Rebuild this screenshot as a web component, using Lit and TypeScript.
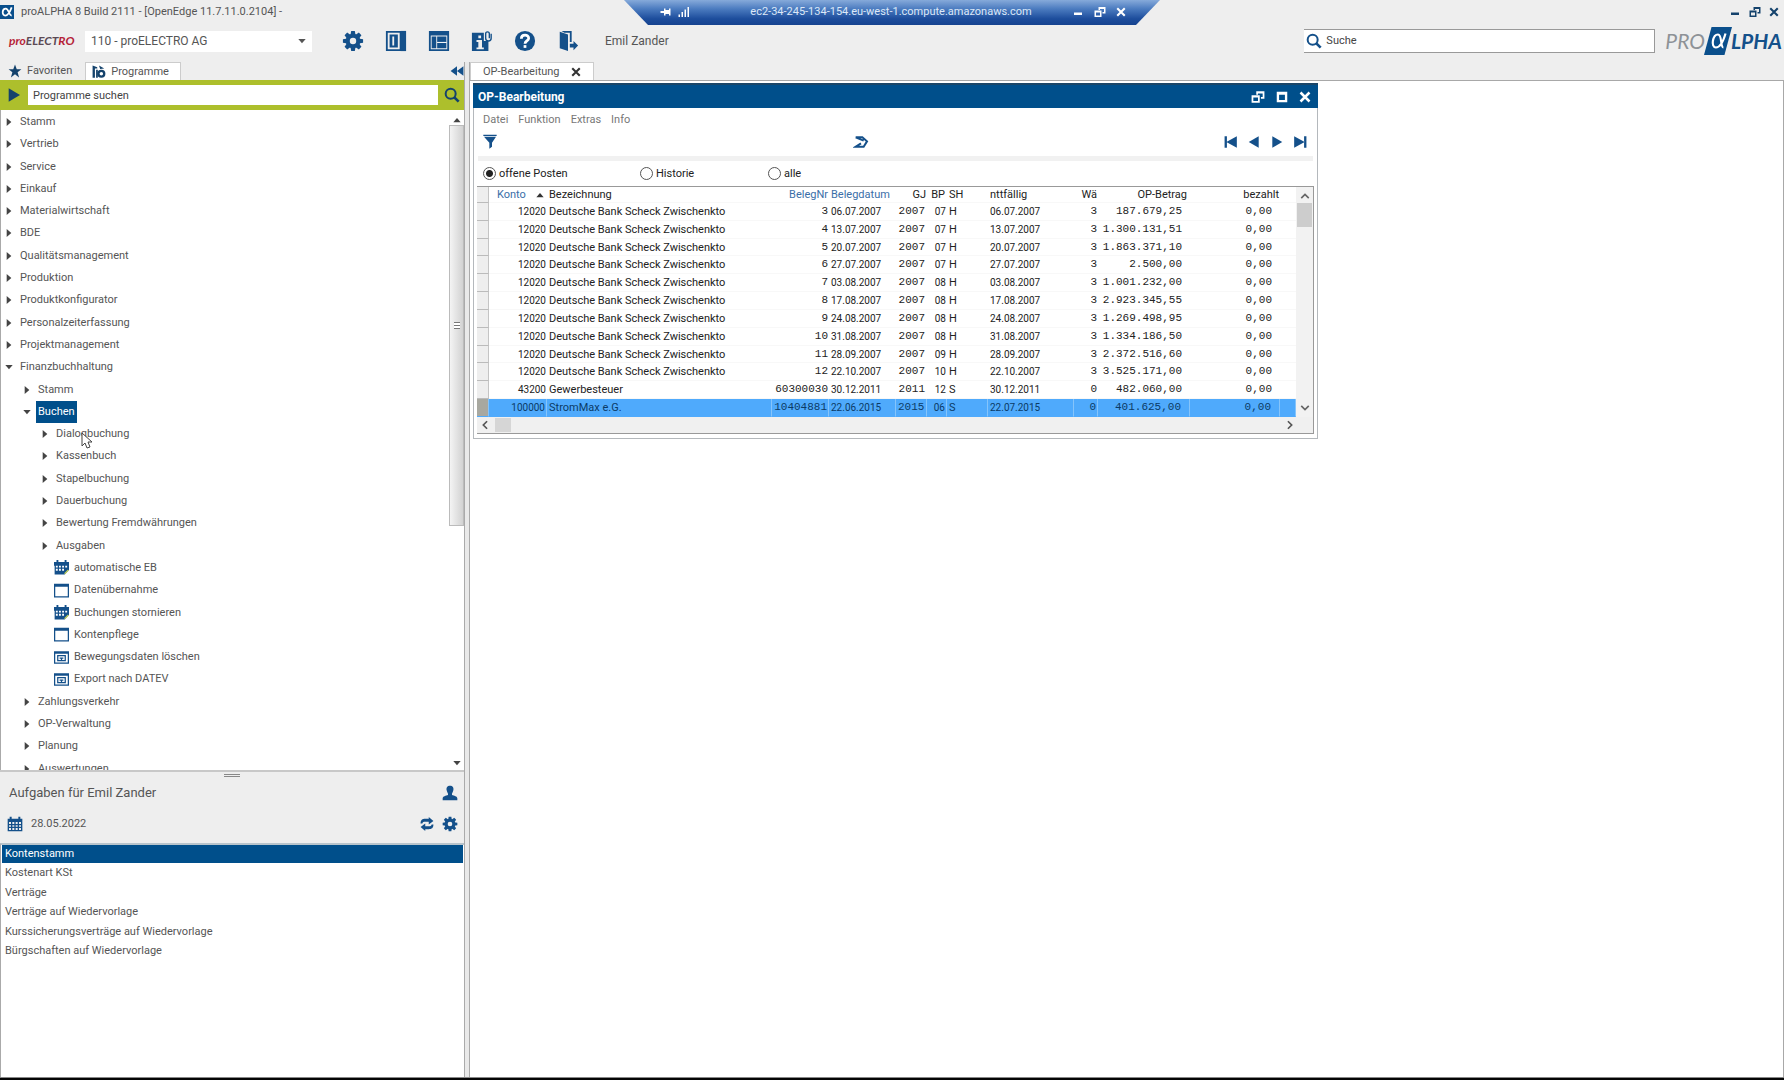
import { LitElement, html, css, svg, nothing } from "lit";
import { customElement, state } from "lit/decorators.js";
import { classMap } from "lit/directives/class-map.js";

const gearTeeth = [0, 45, 90, 135, 180, 225, 270, 315];

const icons = {
  gear: svg`<g>${gearTeeth.map((a) => svg`<path d="M10 1h4l.8 5h-5.600z" transform="rotate(${a} 12 12)"/>`)}<path fill-rule="evenodd" d="M12 4a8 8 0 1 0 0 16 8 8 0 0 0 0-16zm0 4.500a3.500 3.500 0 1 1 0 7 3.500 3.500 0 0 1 0-7z"/></g>`,
  columns: svg`<path fill-rule="evenodd" d="M1 1h17v22H1zM3 3v18h13V3z"/><path d="M17 1h6v22h-6z"/><path fill-rule="evenodd" d="M5 5h9v14H5zM8 7v10h2V7z"/>`,
  layout: svg`<path fill-rule="evenodd" d="M1 1h22v22H1zM3 6v15h18V6z"/><path d="M4 7h5v13H4zM10 7h10v6H10zM10 14h10v6H10z"/><path fill="#fff" d="M10 13h10v1H10z"/>`,
  info: svg`<path fill-rule="evenodd" d="M1 3h13v9h5v11H1zM8 6v3h3V6zM6 11v2h2v6H6v2h8v-2h-2v-8z"/><path fill="none" stroke="currentColor" stroke-width="1.500" d="M22 4v5a3 3 0 0 1-6 0V4a2 2 0 0 1 4 0v5"/>`,
  help: svg`<circle cx="12" cy="12" r="11"/><path fill="none" stroke="#fff" stroke-width="3" d="M8 9.500c0-5 8-5 8-.5 0 3-4 2.500-4 6"/><path fill="#fff" d="M10.500 16.500h3v3h-3z"/>`,
  exit: svg`<path d="M3 2l9 3v18l-9-3z"/><path d="M5 1h11v12h-2V3H8z"/><path d="M14 15h4v-3l5 5-5 5v-3h-4z"/>`,
  star: svg`<path d="M12 1l3 8h8l-6.500 5 2.500 9-7-5.500L5 23l2.500-9L1 9h8z"/>`,
  programs: svg`<path d="M1 1l8 3v2H5v16H1z"/><path d="M7 8h3v14H7zM12 1l9 5-7 1z"/><path fill-rule="evenodd" d="M16 8a7 7 0 1 0 0 14 7 7 0 0 0 0-14zm0 4a3 3 0 1 1 0 6 3 3 0 0 1 0-6z"/>`,
  rewind: svg`<path d="M12 4v16L1 12zM23 4v16L12 12z"/>`,
  play: svg`<path d="M4 2l17 10L4 22z"/>`,
  back: svg`<path d="M20 2L3 12l17 10z"/>`,
  first: svg`<path d="M1 2h4v20H1zM22 2v20L4 12z"/>`,
  last: svg`<path d="M19 2h4v20h-4zM2 2v20l18-10z"/>`,
  search: svg`<g fill="none" stroke="currentColor" stroke-width="3"><circle cx="10" cy="10" r="7.500"/><path stroke-width="4" d="M15.500 15.500L22 22"/></g>`,
  calendar: svg`<path fill-rule="evenodd" d="M1 4h3V1h3v3h10V1h3v3h3v19H1zM3 9v3h3V9zm5 0v3h3V9zm5 0v3h3V9zm5 0v3h3V9zM3 14v2h3v-2zm5 0v2h3v-2zm5 0v2h3v-2zm5 0v2h3v-2zM3 18v3h3v-3zm5 0v3h3v-3zm5 0v3h3v-3zm5 0v3h3v-3z"/>`,
  schedule: svg`<path fill-rule="evenodd" d="M0 3h4V0h3v3h10V0h3v3h4v13l-7 7H1V9H0zM3 9v3h3V9zm5 0v3h3V9zm5 0v3h3V9zm5 0v3h3V9zM3 14v3h3v-3zm5 0v3h3v-3zm5 0v3h3v-3z"/><path fill="none" stroke="#c3cf5a" stroke-width="2" d="M17 22l6-6"/>`,
  form: svg`<path fill-rule="evenodd" d="M0 1h24v22H0zM2 6v15h20V6z"/>`,
  report: svg`<path fill-rule="evenodd" d="M0 2h24v20H0zM2 6v14h20V6z"/><path fill-rule="evenodd" d="M5 8h14v10H5zM7 10v6h10v-6z"/><path d="M9 12h6v2h-2v2h-2v-2H9z"/>`,
  user: svg`<path d="M12 1c4 0 6 3 5 7-.5 2-1.500 4-2 5v2c3 1 8 2 8 5v3H1v-3c0-3 5-4 8-5v-2c-.5-1-1.500-3-2-5-1-4 1-7 5-7z"/>`,
  refresh: svg`<path d="M1 11c0-6 3-8 8-8h6V0l8 7-8 6V8h-6c-3 0-4 0-5 3zM23 13c0 6-3 8-8 8H9v3l-8-7 8-6v5h6c3 0 4 0 5-3z"/>`,
  filter: svg`<path d="M2 1h20v2H2zM3 4h18l-6 9v6l-4 3V13z"/>`,
  flag: svg`<path fill="none" stroke="currentColor" stroke-width="3" d="M4 5h10l7 6-5 8H4l8-5M4 5l12 5"/>`,
  minimize: svg`<path d="M4 13h16v5H4z"/>`,
  restore: svg`<path fill-rule="evenodd" d="M1 9h14v13H1zm3 4v6h8v-6z"/><path d="M9 2h14v13h-6v-3h3V6h-8v2H9z"/>`,
  maximize: svg`<path fill-rule="evenodd" d="M3 3h18v18H3zm4 5v9h10V8z"/>`,
  close: svg`<path fill="none" stroke="currentColor" stroke-width="5" d="M3 3l18 18M21 3L3 21"/>`,
  pin: svg`<path d="M1 10h7V5h3v3h7V5h3v14h-3v-3h-7v3H8v-5H1z"/>`,
  signal: svg`<path d="M1 17h3v5H1zM7 12h3v10H7zM13 7h3v15h-3zM19 2h3v20h-3z"/>`,
  chevronUp: svg`<path fill="none" stroke="currentColor" stroke-width="4" d="M3 17l9-9 9 9"/>`,
  chevronDown: svg`<path fill="none" stroke="currentColor" stroke-width="4" d="M3 7l9 9 9-9"/>`,
  chevronLeft: svg`<path fill="none" stroke="currentColor" stroke-width="4" d="M17 3l-9 9 9 9"/>`,
  chevronRight: svg`<path fill="none" stroke="currentColor" stroke-width="4" d="M7 3l9 9-9 9"/>`,
  triangleUp: svg`<path d="M1 19h22L12 6z"/>`,
  triangleDown: svg`<path d="M1 6h22L12 19z"/>`,
  triangleRight: svg`<path d="M5 0v24l14-12z"/>`,
  alpha: svg`<path d="M0 0h24v24H0z" fill="#0a4f8c"/><path fill="none" stroke="#fff" stroke-width="3" d="M20 4c-3 8-6 14-11 14-6 0-6-12 1-12 5 0 5 12 10 12"/>`,
};

type IconName = keyof typeof icons;

const icon = (name: IconName, cls = "i16") =>
  html`<svg class=${cls} viewBox="0 0 24 24" fill="currentColor" aria-hidden="true">${icons[name]}</svg>`;

interface TreeNode {
  depth: 0 | 1 | 2;
  label: string;
  kind?: IconName;
  open?: boolean;
}

const tree: TreeNode[] = [
  ...["Stamm", "Vertrieb", "Service", "Einkauf", "Materialwirtschaft", "BDE", "Qualitätsmanagement", "Produktion",
    "Produktkonfigurator", "Personalzeiterfassung", "Projektmanagement"].map((label): TreeNode => ({ depth: 0, label })),
  { depth: 0, label: "Finanzbuchhaltung", open: true },
  { depth: 1, label: "Stamm" },
  { depth: 1, label: "Buchen", open: true },
  ...["Dialogbuchung", "Kassenbuch", "Stapelbuchung", "Dauerbuchung", "Bewertung Fremdwährungen", "Ausgaben"]
    .map((label): TreeNode => ({ depth: 2, label })),
  { depth: 2, label: "automatische EB", kind: "schedule" },
  { depth: 2, label: "Datenübernahme", kind: "form" },
  { depth: 2, label: "Buchungen stornieren", kind: "schedule" },
  { depth: 2, label: "Kontenpflege", kind: "form" },
  { depth: 2, label: "Bewegungsdaten löschen", kind: "report" },
  { depth: 2, label: "Export nach DATEV", kind: "report" },
  ...["Zahlungsverkehr", "OP-Verwaltung", "Planung", "Auswertungen"].map((label): TreeNode => ({ depth: 1, label })),
];

const tasks = ["Kontenstamm", "Kostenart KSt", "Verträge", "Verträge auf Wiedervorlage",
  "Kurssicherungsverträge auf Wiedervorlage", "Bürgschaften auf Wiedervorlage"];

const bank = "Deutsche Bank Scheck Zwischenkto";
const rows = [
  ["12020", bank, "3", "06.07.2007", "2007", "07", "H", "06.07.2007", "3", "187.679,25", "0,00"],
  ["12020", bank, "4", "13.07.2007", "2007", "07", "H", "13.07.2007", "3", "1.300.131,51", "0,00"],
  ["12020", bank, "5", "20.07.2007", "2007", "07", "H", "20.07.2007", "3", "1.863.371,10", "0,00"],
  ["12020", bank, "6", "27.07.2007", "2007", "07", "H", "27.07.2007", "3", "2.500,00", "0,00"],
  ["12020", bank, "7", "03.08.2007", "2007", "08", "H", "03.08.2007", "3", "1.001.232,00", "0,00"],
  ["12020", bank, "8", "17.08.2007", "2007", "08", "H", "17.08.2007", "3", "2.923.345,55", "0,00"],
  ["12020", bank, "9", "24.08.2007", "2007", "08", "H", "24.08.2007", "3", "1.269.498,95", "0,00"],
  ["12020", bank, "10", "31.08.2007", "2007", "08", "H", "31.08.2007", "3", "1.334.186,50", "0,00"],
  ["12020", bank, "11", "28.09.2007", "2007", "09", "H", "28.09.2007", "3", "2.372.516,60", "0,00"],
  ["12020", bank, "12", "22.10.2007", "2007", "10", "H", "22.10.2007", "3", "3.525.171,00", "0,00"],
  ["43200", "Gewerbesteuer", "60300030", "30.12.2011", "2011", "12", "S", "30.12.2011", "0", "482.060,00", "0,00"],
  ["100000", "StromMax e.G.", "10404881", "22.06.2015", "2015", "06", "S", "22.07.2015", "0", "401.625,00", "0,00"],
];

const columns = [
  { label: "Konto", cls: "c-konto num", sort: true },
  { label: "Bezeichnung", cls: "c-bez" },
  { label: "BelegNr", cls: "c-nr mono", sort: true },
  { label: "Belegdatum", cls: "c-datum date", sort: true },
  { label: "GJ", cls: "c-gj mono" },
  { label: "BP", cls: "c-bp num" },
  { label: "SH", cls: "c-sh" },
  { label: "nttfällig", cls: "c-fall date" },
  { label: "Wä", cls: "c-wae mono" },
  { label: "OP-Betrag", cls: "c-betrag mono" },
  { label: "bezahlt", cls: "c-bez2 mono" },
];

const base = css`
  * { box-sizing: border-box; }
  button, input, select { font: inherit; color: inherit; border: 0; margin: 0; padding: 0; background: none; border-radius: 0; outline: none; }
  button { display: flex; align-items: center; justify-content: center; cursor: pointer; }
  ul { list-style: none; margin: 0; padding: 0; }
  svg { display: block; flex: none; }
  .i8 { width: 8px; height: 8px; }
  .i10 { width: 10px; height: 10px; }
  .i12 { width: 12px; height: 12px; }
  .i14 { width: 14px; height: 14px; }
  .i16 { width: 16px; height: 16px; }
  .i22 { width: 22px; height: 22px; }
`;

@customElement("op-window")
class OpWindow extends LitElement {
  @state() private filter = "offene Posten";
  @state() private selected = 11;

  static styles = [base, css`
    :host { display: block; background: #fff; border: 1px solid #b4b8bc; border-top: 0; color: #222; padding-bottom: 4px; }
    .caption { display: flex; align-items: center; height: 25px; margin: 0 -1px; padding: 0 7px 0 5px; background: #004f8b; border-top: 2px solid #1b4668; color: #fff; }
    h1 { flex: 1; margin: 0; font: bold 12px/16px Roboto, sans-serif; }
    .buttons { display: flex; gap: 10px; }
    .menu { display: flex; gap: 10px; padding: 5px 9px 0; height: 22px; color: #777; }
    .menu button { height: 14px; }
    .tools { display: flex; align-items: center; justify-content: space-between; height: 24px; padding: 0 10px 0 8px; color: #14508a; }
    .nav { display: flex; gap: 9px; }
    .rule { height: 5px; margin: 2px 4px 0; background: #f1f1f1; }
    .filters { display: grid; grid-template-columns: 157px 128px 1fr; border: 0; margin: 0; padding: 4px 9px; height: 25px; }
    .filters label { display: flex; align-items: center; gap: 3px; }
    .filters input { appearance: none; width: 13px; height: 13px; border: 1px solid #555; border-radius: 50%; background: #fff; }
    .filters input:checked { background: radial-gradient(#222 0 3px, #fff 4px); }
    .browse { display: grid; grid-template-columns: 1fr 17px; margin: 0 3px; border: 1px solid #999; border-width: 1px 1px 1px 0; }
    table { width: 100%; height: 230px; table-layout: fixed; border-collapse: separate; border-spacing: 0; }
    td, th { padding: 0 1px 0 2px; overflow: hidden; white-space: nowrap; font-weight: normal; text-align: left; line-height: 15px; border-bottom: 1px solid #f8f8f8; }
    th { color: #222; }
    th button { display: inline-flex; gap: 10px; color: #3a6ea8; }
    th button svg { color: #333; }
    .grip { width: 12px; background: #eee; border-right: 1px solid #c4c4c4; border-bottom: 1px solid #bbb; }
    .c-konto { width: 58px; }
    .c-bez { width: 225px; }
    .c-nr { width: 57px; }
    .c-datum { width: 67px; }
    .c-gj { width: 31px; }
    .c-bp { width: 20px; }
    .c-sh { width: 41px; }
    .c-fall { width: 86px; }
    .c-wae { width: 24px; }
    .c-betrag { width: 92px; }
    .c-bez2 { width: 90px; }
    td.num, td.date { font-size: 10px; }
    .num, .mono { text-align: right; }
    td.mono { font: 11px/15px "Liberation Mono", monospace; }
    th.c-konto { padding-left: 8px; text-align: left; }
    th.c-bp { padding: 0 2px; }
    td.c-gj { padding-right: 2px; }
    th.c-betrag { padding-right: 3px; }
    td.c-betrag, td.c-bez2 { padding-right: 8px; }
    tr.selected td { background: #4faafc; color: #0b3a66; border-right: 1px solid #85c4fb; border-bottom-color: #4faafc; }
    tr.selected td.grip { background: #a8a8a0; }
    .vscroll { display: flex; flex-direction: column; align-items: center; background: #f2f2f2; color: #666; padding: 4px 0; }
    .vthumb { width: 15px; height: 24px; margin-top: 2px; background: #cdcdcd; }
    .push { flex: 1; }
    .hscroll { grid-column: 1 / -1; display: flex; align-items: center; height: 16px; background: #f0f0f0; color: #555; padding: 0 18px 0 3px; }
    .hthumb { width: 16px; height: 14px; margin-left: 5px; background: #d6d6d6; }
  `];

  render() {
    return html`
      <div class="caption">
        <h1>OP-Bearbeitung</h1>
        <div class="buttons">
          <button aria-label="Wiederherstellen">${icon("restore", "i14")}</button>
          <button aria-label="Maximieren">${icon("maximize", "i14")}</button>
          <button aria-label="Schließen">${icon("close", "i12")}</button>
        </div>
      </div>
      <div class="menu">${["Datei", "Funktion", "Extras", "Info"].map((m) => html`<button>${m}</button>`)}</div>
      <div class="tools">
        <button aria-label="Filter">${icon("filter", "i16")}</button>
        <button aria-label="Markieren">${icon("flag", "i16")}</button>
        <div class="nav">
          <button aria-label="Erster">${icon("first", "i14")}</button>
          <button aria-label="Vorheriger">${icon("back", "i14")}</button>
          <button aria-label="Nächster">${icon("play", "i14")}</button>
          <button aria-label="Letzter">${icon("last", "i14")}</button>
        </div>
      </div>
      <div class="rule"></div>
      <div class="filters" role="radiogroup">
        ${["offene Posten", "Historie", "alle"].map((f) => html`
          <label><input type="radio" name="filter" .checked=${f === this.filter} @change=${() => (this.filter = f)}>${f}</label>`)}
      </div>
      <div class="browse">
        <table>
          <thead><tr>
            <th class="grip"></th>
            ${columns.map((c, i) => html`<th class=${c.cls}>${c.sort
              ? html`<button>${c.label}${i === 0 ? icon("triangleUp", "i8") : nothing}</button>` : c.label}</th>`)}
            <th></th>
          </tr></thead>
          <tbody>
            ${rows.map((r, i) => html`
              <tr class=${classMap({ selected: i === this.selected })} @click=${() => (this.selected = i)}>
                <td class="grip"></td>
                ${r.map((v, c) => html`<td class=${columns[c].cls}>${v}</td>`)}
                <td></td>
              </tr>`)}
          </tbody>
        </table>
        <div class="vscroll">${icon("chevronUp", "i10")}<div class="vthumb"></div><div class="push"></div>${icon("chevronDown", "i10")}</div>
        <div class="hscroll">${icon("chevronLeft", "i10")}<div class="hthumb"></div><div class="push"></div>${icon("chevronRight", "i10")}</div>
      </div>`;
  }
}

@customElement("app-root")
class AppRoot extends LitElement {
  @state() private selectedNode = 13;
  @state() private selectedTask = 0;

  static styles = [base, css`
    :host { display: flex; flex-direction: column; height: 100vh; overflow: hidden; position: relative; background: #eeeeee; color: #555; font: 11px/14px Roboto, sans-serif; }
    .titlebar { display: flex; align-items: center; height: 22px; padding: 1px 5px 0 0; gap: 7px; }
    .titlebar .text { flex: 1; }
    .controls { display: flex; gap: 8px; color: #14426c; }
    .remote { position: absolute; top: 0; left: 50%; width: 536px; height: 25px; transform: translateX(-50%); display: flex; align-items: center; padding: 0 34px 2px 36px; color: #dce8f8; background: linear-gradient(#86aada, #4c7cc0 35%, #1d4d9c 75%, #16438f); clip-path: polygon(0 0, 100% 0, 512px 100%, 24px 100%); }
    .remote .host { flex: 1; padding-left: 20px; text-align: center; }
    .remote button, .remote svg { color: #fff; }
    .status { display: flex; gap: 6px; }
    .remote .controls { gap: 10px; }
    .toolbar { display: flex; align-items: center; height: 38px; padding: 0 2px 0 9px; color: #14508a; }
    .company { width: 76px; font: italic bold 12px/14px Lato, sans-serif; color: #5b4a55; }
    .company .red { color: #b51f38; }
    .client { position: relative; display: flex; align-items: center; width: 227px; color: #333; }
    .client select { appearance: none; width: 100%; height: 21px; padding: 0 24px 0 6px; background: #fff; font-size: 12px; color: #555; }
    .client svg { position: absolute; right: 6px; color: #555; pointer-events: none; }
    .actions { display: flex; gap: 21px; margin: 0 26px 0 30px; }
    .user { flex: 1; font-size: 12px; color: #555; }
    .search { display: flex; align-items: center; gap: 4px; width: 351px; height: 24px; padding-left: 2px; background: #fff; border: 1px solid #999; border-width: 1px 1px 1px 0; color: #222; }
    .search svg { color: #14508a; }
    .search input { flex: 1; min-width: 0; }
    input::placeholder { color: #444; opacity: 1; }
    .brand { display: flex; align-items: center; margin-left: 10px; font: italic 21px/26px Lato, sans-serif; color: #8d9297; }
    .brand svg { width: 28px; height: 28px; margin: 0 -1px; }
    .brand b { color: #14508a; }
    .main { flex: 1; min-height: 0; display: grid; grid-template-columns: 464px 6px 1fr; }
    .side { display: flex; flex-direction: column; min-height: 0; }
    .tabs { display: flex; align-items: flex-end; height: 20px; }
    .tab { height: 18px; gap: 5px; color: #555; }
    .tab svg { color: #14426c; }
    .tab.fav { padding: 0 13px 0 8px; }
    .tab.active { background: #fff; border: 1px solid #ccc; border-bottom: 0; }
    .tab.prog { padding: 0 11px 0 6px; }
    .tabs .fold { margin-left: auto; height: 18px; color: #14508a; }
    .find { display: flex; align-items: center; height: 30px; padding: 0 4px 0 6px; gap: 6px; background: #adbf2c; color: #14426c; }
    .find input { flex: 1; min-width: 0; height: 20px; padding: 0 5px; background: #fff; color: #333; }
    .treepane { flex: 1; min-height: 0; display: grid; grid-template-columns: 1fr 15px; background: #fff; border-left: 1px solid #aaa; overflow: hidden; }
    .tree { display: flex; flex-direction: column; justify-content: space-between; height: calc(100% + 9px); padding: 1px 0 0 4px; }
    .tree li { display: flex; height: 22px; }
    .tree .d1 { padding-left: 18px; }
    .tree .d2 { padding-left: 36px; }
    .tree .leaf { padding-left: 49px; }
    .tree button { gap: 5px; }
    .tree button svg { color: #444; }
    .tree button .i16 { width: 15px; height: 15px; color: #14508a; }
    .tree .label { display: flex; align-items: center; height: 22px; padding: 0 2px; }
    .tree .leaf .label { padding: 0; }
    .tree .selected .label { background: #004f8b; color: #fff; }
    .bar { display: flex; flex-direction: column; align-items: center; padding: 6px 0 4px; color: #444; }
    .thumb { display: flex; align-items: center; justify-content: center; width: 100%; height: 401px; flex: none; margin-top: 1px; border: 1px solid #bbb; background: linear-gradient(90deg, #f4f4f4, #d2d2d2); }
    .ridge { width: 6px; height: 7px; background: repeating-linear-gradient(#777 0 1px, #fff 1px 3px); }
    .push { flex: 1; }
    .tasks { flex: none; display: flex; flex-direction: column; height: 307px; border-top: 2px solid #c8c8c8; }
    .handle { width: 16px; height: 3px; margin: 2px auto 0; border: 1px solid #888; border-width: 1px 0; }
    .row { display: flex; align-items: center; height: 31px; padding: 0 6px 0 7px; gap: 8px; color: #14508a; }
    .row.head { padding-left: 9px; }
    .row h2, .row .day { flex: 1; margin: 0; color: #555; }
    .row h2 { font: 13px/16px Roboto, sans-serif; }
    .list { flex: 1; margin-top: 4px; background: #fff; border-top: 2px solid #b8c4cc; border-left: 1px solid #aaa; padding: 0 1px; }
    .list ul { display: flex; flex-direction: column; justify-content: space-between; height: 115px; }
    .list button { width: 100%; height: 18px; justify-content: flex-start; padding: 0 3px; }
    .list .selected { background: #004f8b; color: #fff; }
    .splitter { border: 1px solid #aaa; border-width: 0 1px; background: #e9e9e9; margin-top: 2px; }
    .desk { display: flex; flex-direction: column; min-width: 0; }
    .desk .tab { gap: 11px; padding: 0 12px; }
    .desk .tab svg { color: #333; }
    .canvas { position: relative; flex: 1; background: #fff; border: 1px solid #a8a8a8; border-left: 0; border-bottom: 0; }
    op-window { position: absolute; left: 3px; top: 2px; width: 845px; }
    .taskbar { flex: none; height: 3px; border-top: 1px solid #888; background: #050505; }
    .pointer { position: absolute; left: 81px; top: 432px; width: 12px; height: 18px; }
  `];

  private node(n: TreeNode, i: number) {
    const cls = { d1: n.depth === 1, d2: n.depth === 2 && !n.kind, leaf: !!n.kind, selected: i === this.selectedNode };
    return html`<li class=${classMap(cls)}><button @click=${() => (this.selectedNode = i)}>
      ${n.kind ? icon(n.kind) : icon(n.open ? "triangleDown" : "triangleRight", "i8")}<span class="label">${n.label}</span>
    </button></li>`;
  }

  render() {
    return html`
      <header class="titlebar">
        ${icon("alpha", "i14")}
        <span class="text">proALPHA 8 Build 2111 - [OpenEdge 11.7.11.0.2104] -</span>
        <div class="controls">
          <button aria-label="Minimieren">${icon("minimize", "i12")}</button>
          <button aria-label="Wiederherstellen">${icon("restore", "i12")}</button>
          <button aria-label="Schließen">${icon("close", "i10")}</button>
        </div>
      </header>
      <div class="remote">
        <div class="status">${icon("pin", "i12")}${icon("signal", "i12")}</div>
        <span class="host">ec2-34-245-134-154.eu-west-1.compute.amazonaws.com</span>
        <div class="controls">
          <button aria-label="Minimieren">${icon("minimize", "i12")}</button>
          <button aria-label="Wiederherstellen">${icon("restore", "i12")}</button>
          <button aria-label="Schließen">${icon("close", "i10")}</button>
        </div>
      </div>
      <div class="toolbar">
        <div class="company"><span class="red">pro</span>ELECT<span class="red">RO</span></div>
        <div class="client">
          <select aria-label="Mandant"><option>110 - proELECTRO AG</option></select>${icon("triangleDown", "i8")}
        </div>
        <div class="actions">
          <button aria-label="Einstellungen">${icon("gear", "i22")}</button>
          <button aria-label="Spalten">${icon("columns", "i22")}</button>
          <button aria-label="Layout">${icon("layout", "i22")}</button>
          <button aria-label="Information">${icon("info", "i22")}</button>
          <button aria-label="Hilfe">${icon("help", "i22")}</button>
          <button aria-label="Abmelden">${icon("exit", "i22")}</button>
        </div>
        <span class="user">Emil Zander</span>
        <div class="search">${icon("search")}<input type="search" aria-label="Suche" placeholder="Suche"></div>
        <div class="brand">PRO<svg viewBox="0 0 26 26" aria-hidden="true"><path fill="#0a4f8c" d="M7 0h19l-7 26H0z"/><path fill="none" stroke="#fff" stroke-width="2" d="M20 6c-2 7-5 13-9 13-5 0-3-12 2-12 4 0 2 12 5 12"/></svg><b>LPHA</b></div>
      </div>
      <div class="main">
        <aside class="side">
          <div class="tabs">
            <button class="tab fav">${icon("star", "i14")}Favoriten</button>
            <button class="tab active prog">${icon("programs", "i14")}Programme</button>
            <button class="fold" aria-label="Einklappen">${icon("rewind", "i14")}</button>
          </div>
          <div class="find">
            <button aria-label="Starten">${icon("play")}</button>
            <input type="text" aria-label="Programme suchen" placeholder="Programme suchen">
            <button aria-label="Suchen">${icon("search")}</button>
          </div>
          <div class="treepane">
            <ul class="tree">${tree.map((n, i) => this.node(n, i))}</ul>
            <div class="bar">${icon("triangleUp", "i8")}<div class="thumb"><div class="ridge"></div></div><div class="push"></div>${icon("triangleDown", "i8")}</div>
          </div>
          <section class="tasks">
            <div class="handle"></div>
            <div class="row head"><h2>Aufgaben für Emil Zander</h2><button aria-label="Benutzer">${icon("user")}</button></div>
            <div class="row">${icon("calendar")}<span class="day">28.05.2022</span>
              <button aria-label="Aktualisieren">${icon("refresh", "i14")}</button><button aria-label="Einstellungen">${icon("gear")}</button></div>
            <div class="list"><ul>
              ${tasks.map((t, i) => html`<li><button class=${classMap({ selected: i === this.selectedTask })} @click=${() => (this.selectedTask = i)}>${t}</button></li>`)}
            </ul></div>
          </section>
        </aside>
        <div class="splitter"></div>
        <section class="desk">
          <div class="tabs"><button class="tab active">OP-Bearbeitung ${icon("close", "i10")}</button></div>
          <div class="canvas"><op-window></op-window></div>
        </section>
      </div>
      <div class="taskbar"></div>
      <svg class="pointer" viewBox="0 0 12 18" aria-hidden="true"><path fill="#fff" stroke="#444" d="M1 1v13l3-3 2 5 3-1-2-5h4z"/></svg>`;
  }
}
